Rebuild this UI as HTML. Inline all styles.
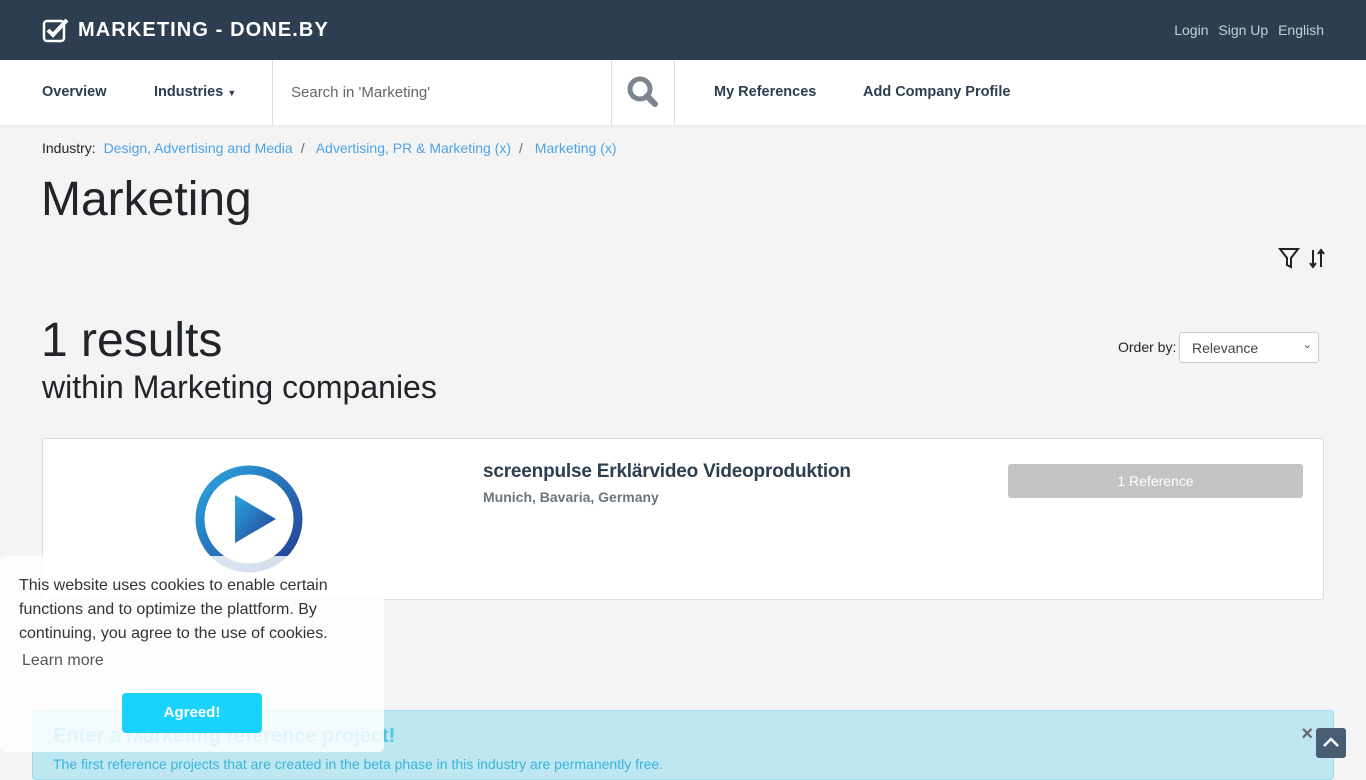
<!DOCTYPE html>
<html><head><meta charset="utf-8"><style>
*{box-sizing:border-box;margin:0;padding:0}
body{width:1366px;height:768px;overflow:hidden;background:#f4f4f4;font-family:"Liberation Sans",Roboto,sans-serif;color:#212529;position:relative}
.top{height:60px;background:#2c3e50;position:relative}
.logo{position:absolute;left:42px;top:17px;color:#fff;font-weight:bold;font-size:20px;letter-spacing:1.1px;display:flex;align-items:center}
.logo svg{margin-right:8px}
.tr{position:absolute;right:42px;top:22px;font-size:14px;color:#c8ced6}
.tr span{margin-left:6px}
.nav{height:65px;background:#fff;position:relative;box-shadow:0 1px 3px rgba(0,0,0,.05)}
.nav .i{position:absolute;top:24px;font-size:14.5px;font-weight:bold;color:#2c3e50}
.srch{position:absolute;left:272px;top:0;width:340px;height:65px;border-left:1px solid #ddd;border-right:1px solid #ddd;font-size:15px;color:#666;padding:24px 18px}
.sb{position:absolute;left:611px;top:0;width:64px;height:65px;border-right:1px solid #ddd}
a{color:#4da3e8;text-decoration:none}
.bc{position:absolute;left:42px;top:140px;font-size:14px}
.bc .s{color:#666;margin:0 8px}
h1{position:absolute;left:41px;top:172px;font-weight:normal;font-size:48px}
.res{position:absolute;left:41px;top:313px;font-weight:normal;font-size:48px}
.sub{position:absolute;left:42px;top:369px;font-size:32px}
.ord{position:absolute;left:1118px;top:339px;font-size:14px}
.sel{position:absolute;left:1179px;top:332px;width:140px;height:31px;background:#fff;border:1px solid #ccc;border-radius:3px;font-size:14px;padding:7px 12px;color:#444}
.card{position:absolute;left:42px;top:438px;width:1282px;height:162px;background:#fff;border:1px solid #ddd;border-radius:3px}
.ct{position:absolute;left:440px;top:22px;font-size:19px;font-weight:bold;color:#2c3e50;letter-spacing:-0.2px}
.cl{position:absolute;left:440px;top:50px;font-size:14px;color:#6c757d;font-weight:bold}
.btn{position:absolute;left:965px;top:25px;width:295px;height:34px;background:#c4c4c4;border-radius:3px;color:#fff;font-size:14px;text-align:center;line-height:34px}
.info{position:absolute;left:32px;top:710px;width:1302px;height:70px;background:#bee7f1;border:1px solid #9edbef;border-radius:4px}
.info b{position:absolute;left:20px;top:14px;font-size:20px;color:#4ec5e6}
.info p{position:absolute;left:20px;top:45px;font-size:14px;color:#38b5da}
.ck{position:absolute;left:0;top:556px;width:384px;height:196px;background:rgba(255,255,255,.82);border-radius:5px;font-size:16px;color:#333;line-height:24px;padding:18px 19px 0 19px}
.ag{position:absolute;left:122px;top:137px;width:140px;height:40px;background:#1ad2fe;border-radius:4px;color:#fff;font-weight:bold;font-size:15px;text-align:center;line-height:40px}
.up{position:absolute;left:1316px;top:728px;width:30px;height:30px;background:#475d74;border-radius:3px}
</style></head><body>
<div class="top">
<div class="logo"><svg width="28" height="26" viewBox="0 0 28 26"><rect x="2" y="4" width="20" height="20" rx="3" fill="none" stroke="#fff" stroke-width="2.5"/><path d="M6 13l5 5L25 3" fill="none" stroke="#fff" stroke-width="4"/></svg>MARKETING - DONE.BY</div>
<div class="tr"><span>Login</span> <span>Sign Up</span> <span>English</span></div>
</div>
<div class="nav">
<div class="i" style="left:42px">Overview</div>
<div class="i" style="left:154px">Industries <span style="font-size:9px">▼</span></div>
<div class="srch">Search in 'Marketing'</div>
<div class="sb"><svg width="64" height="65"><circle cx="29" cy="29" r="10" fill="none" stroke="#7c858d" stroke-width="5"/><path d="M36 36l8 8" stroke="#7c858d" stroke-width="6" stroke-linecap="round"/></svg></div>
<div class="i" style="left:714px">My References</div>
<div class="i" style="left:863px">Add Company Profile</div>
</div>
<div class="bc">Industry: <a href="#" style="margin-left:4px">Design, Advertising and Media</a><span class="s">/</span> <a href="#">Advertising, PR &amp; Marketing (x)</a><span class="s">/</span> <a href="#">Marketing (x)</a></div>
<h1>Marketing</h1>
<svg style="position:absolute;left:1278px;top:247px" width="50" height="24"><path d="M2 2h18l-7 9v9l-4-2v-7z" fill="none" stroke="#222" stroke-width="2"/><path d="M35 3v17M32 16l3 4M43 20V3M40 7l3-4l3 4M32 16l3 4l3-4" fill="none" stroke="#222" stroke-width="2"/></svg>
<div class="res">1 results</div>
<div class="sub">within Marketing companies</div>
<div class="ord">Order by:</div>
<div class="sel">Relevance<span style="position:absolute;right:6px;top:5px;font-size:11px">⌄</span></div>
<div class="card">
<svg style="position:absolute;left:150px;top:25px" width="112" height="112"><defs><linearGradient id="g" x1="0" y1="0" x2="1" y2="1"><stop offset="0" stop-color="#2aa6df"/><stop offset="1" stop-color="#253c93"/></linearGradient></defs><circle cx="56" cy="55" r="49" fill="none" stroke="url(#g)" stroke-width="9"/><path d="M42 31v48l41-24z" fill="url(#g)"/></svg>
<div class="ct">screenpulse Erklärvideo Videoproduktion</div>
<div class="cl">Munich, Bavaria, Germany</div>
<div class="btn">1 Reference</div>
</div>
<div class="info"><b>Enter a Marketing reference project!</b><p>The first reference projects that are created in the beta phase in this industry are permanently free.</p><span style="position:absolute;right:20px;top:12px;font-size:20px;font-weight:bold;color:#666">×</span></div>
<div class="ck">This website uses cookies to enable certain functions and to optimize the plattform. By continuing, you agree to the use of cookies.<div style="margin-top:3px;margin-left:3px;color:#555">Learn more</div><div class="ag">Agreed!</div></div>
<div class="up"><svg width="30" height="30"><path d="M8 18l7-7l7 7" fill="none" stroke="#fff" stroke-width="2.5"/></svg></div>
</body></html>
